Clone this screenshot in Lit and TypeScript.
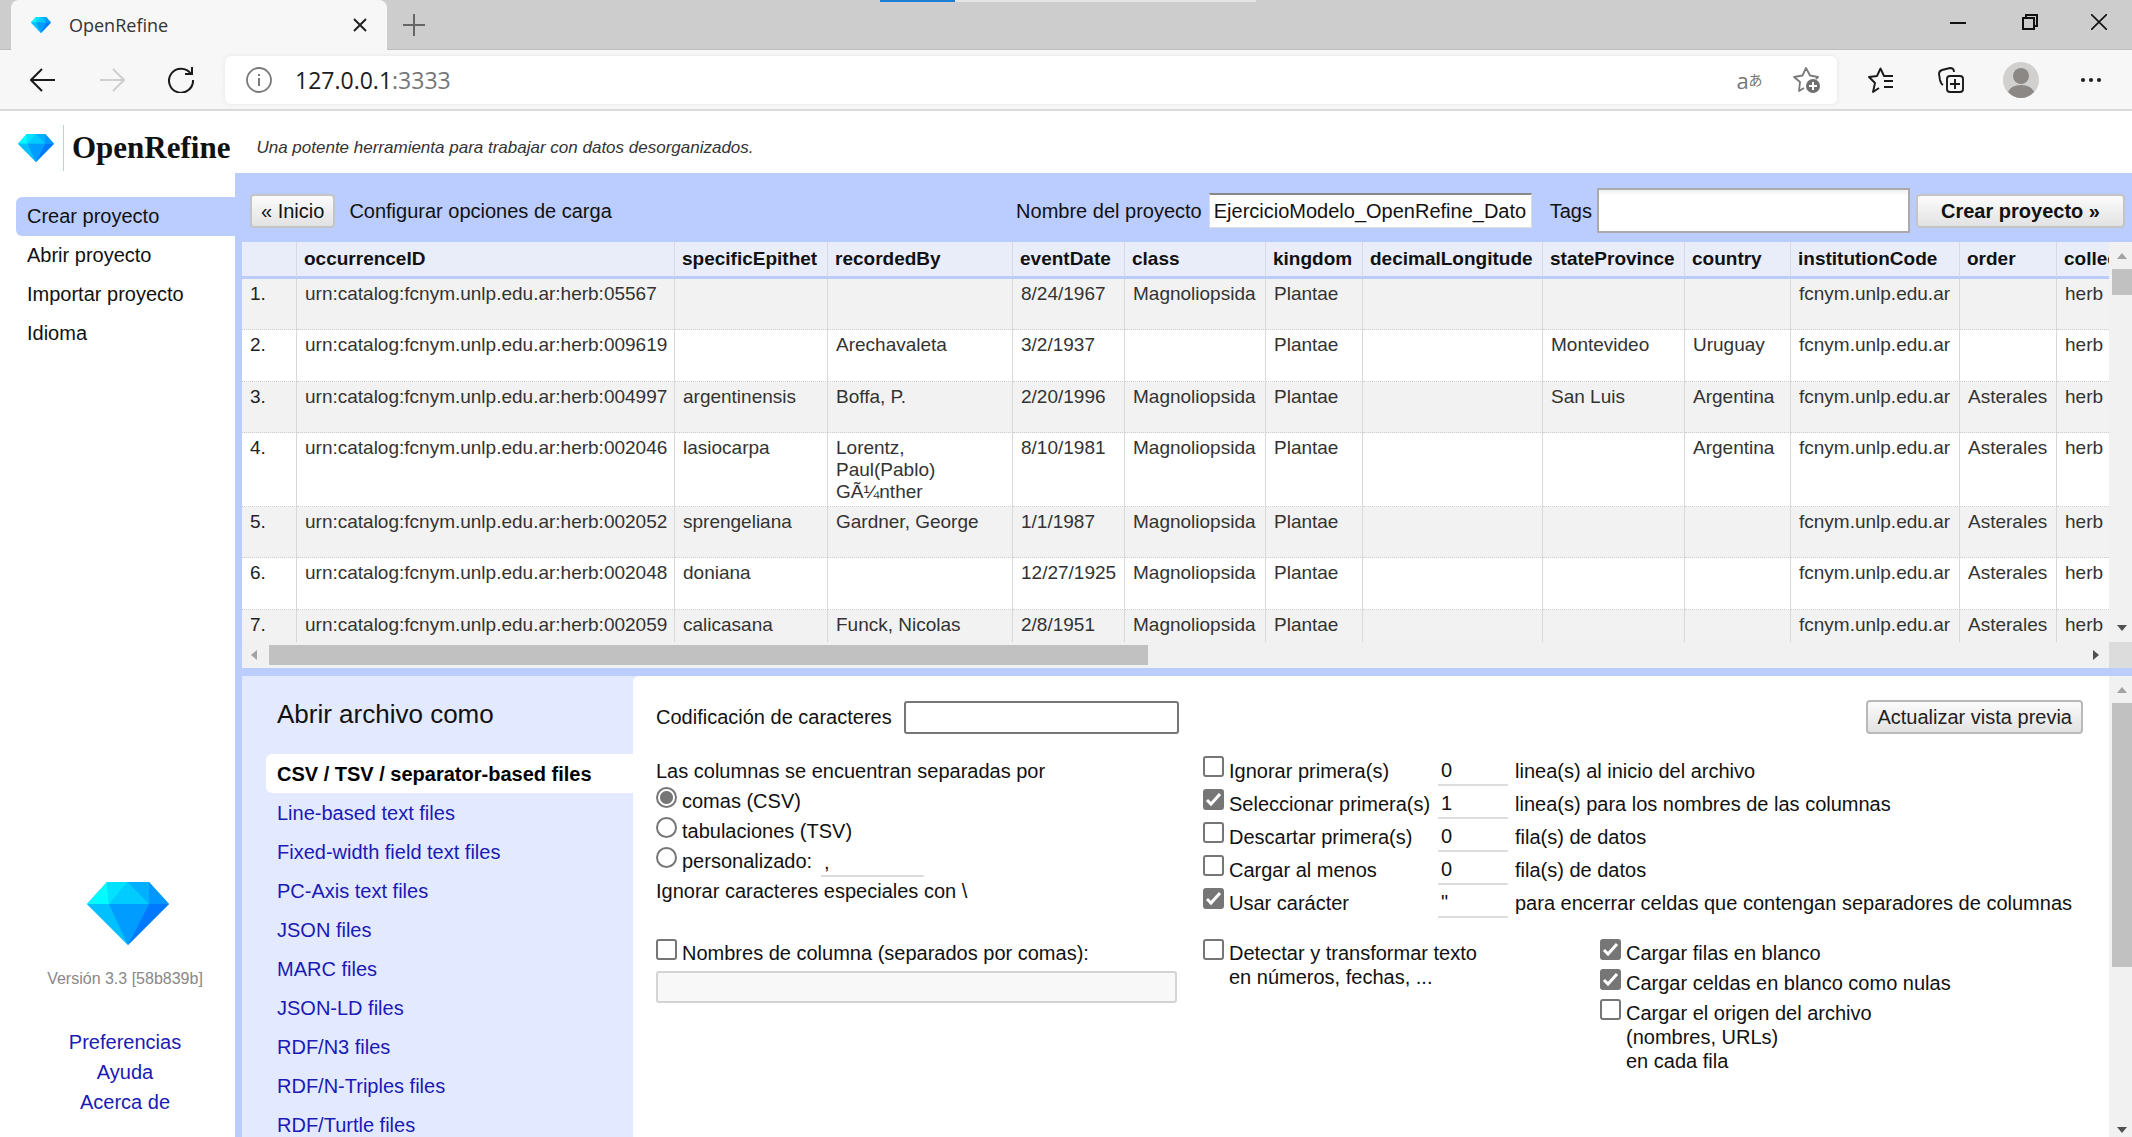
import { LitElement, html, svg, css } from "lit";
import { customElement } from "lit/decorators.js";

const COLUMNS: [string, number][] = [
  ["", 55],
  ["occurrenceID", 378],
  ["specificEpithet", 153],
  ["recordedBy", 185],
  ["eventDate", 112],
  ["class", 141],
  ["kingdom", 97],
  ["decimalLongitude", 180],
  ["stateProvince", 142],
  ["country", 106],
  ["institutionCode", 169],
  ["order", 97],
  ["collectionCode", 160],
];

const INST = "fcnym.unlp.edu.ar";
const URN = "urn:catalog:fcnym.unlp.edu.ar:herb:";
const ROWS: string[][] = [
  [URN + "05567", "", "", "8/24/1967", "Magnoliopsida", "Plantae", "", "", "", INST, "", "herb"],
  [URN + "009619", "", "Arechavaleta", "3/2/1937", "", "Plantae", "", "Montevideo", "Uruguay", INST, "", "herb"],
  [URN + "004997", "argentinensis", "Boffa, P.", "2/20/1996", "Magnoliopsida", "Plantae", "", "San Luis", "Argentina", INST, "Asterales", "herb"],
  [URN + "002046", "lasiocarpa", "Lorentz, Paul(Pablo) GÃ¼nther", "8/10/1981", "Magnoliopsida", "Plantae", "", "", "Argentina", INST, "Asterales", "herb"],
  [URN + "002052", "sprengeliana", "Gardner, George", "1/1/1987", "Magnoliopsida", "Plantae", "", "", "", INST, "Asterales", "herb"],
  [URN + "002048", "doniana", "", "12/27/1925", "Magnoliopsida", "Plantae", "", "", "", INST, "Asterales", "herb"],
  [URN + "002059", "calicasana", "Funck, Nicolas", "2/8/1951", "Magnoliopsida", "Plantae", "", "", "", INST, "Asterales", "herb"],
];

const gem = (cls: string) => html`<svg class=${cls} viewBox="0 0 82 63" preserveAspectRatio="none" aria-hidden="true">
  ${svg`<path d="M20 0 H62 L82 22 L41 63 L0 22 Z" fill="#00b4ff"/>
  <path d="M20 0 L0 22 L22 22 Z" fill="#00fcff"/>
  <path d="M20 0 L41 0 L22 22 Z" fill="#00e2ff"/>
  <path d="M41 0 L62 22 H22 Z" fill="#00ccff"/>
  <path d="M41 0 H62 L62 22 Z" fill="#00b0ff"/>
  <path d="M62 0 L82 22 H62 Z" fill="#0098ff"/>
  <path d="M0 22 H22 L41 63 Z" fill="#00c0ff"/>
  <path d="M22 22 H62 L41 63 Z" fill="#009cff"/>
  <path d="M62 22 H82 L41 63 Z" fill="#0078ff"/>`}
</svg>`;

const arrow = (dir: string, off = false) => {
  const d: Record<string, string> = {
    up: "M1 9 L6 3 L11 9 Z",
    down: "M1 3 L6 9 L11 3 Z",
    left: "M9 1 L3 6 L9 11 Z",
    right: "M3 1 L9 6 L3 11 Z",
  };
  return html`<svg width="12" height="12" viewBox="0 0 12 12" aria-hidden="true"><path d=${d[dir]} fill=${off ? "#a3a3a3" : "#505050"}></path></svg>`;
};

@customElement("browser-chrome")
class BrowserChrome extends LitElement {
  static styles = css`
    :host { display: block; font-family: "Open Sans", "Noto Sans CJK JP", sans-serif; }
    * { box-sizing: border-box; }
    button { border: 0; background: none; padding: 0; margin: 0; display: flex; align-items: center; justify-content: center; flex: none; font-family: inherit; }
    .tabs { position: relative; display: flex; height: 50px; background: #cdcdcd; box-shadow: inset 0 -1px #bfbfbf; padding-left: 11px; }
    .tab { display: flex; align-items: center; width: 376px; background: #f7f7f7; border-radius: 8px 8px 0 0; padding: 0 19px 0 20px; gap: 18px; font-size: 18px; color: #333; }
    .tab .name { flex: 1; }
    .favicon { width: 20px; height: 16px; }
    .plus { width: 54px; }
    .grow { flex: 1; }
    .win { width: 72px; height: 44px; }
    .win:last-of-type { width: 66px; }
    .load { position: absolute; left: 880px; top: 0; width: 376px; height: 2px; background: linear-gradient(90deg, #1b7fd6 75px, #e4e4e4 75px); }
    .bar { display: flex; align-items: center; height: 61px; background: #f7f7f7; border-bottom: 2px solid #d9d9d9; padding: 0 6px 0 8px; }
    .nav { width: 69px; height: 44px; }
    .address { flex: 1; height: 48px; display: flex; align-items: center; background: #fff; border-radius: 6px; box-shadow: 0 0 4px #e4e4e4; padding: 0 2px 0 21px; margin: 0 9px 0 10px; }
    .urltext { font-size: 23px; line-height: 32px; color: #1c1c1c; margin-left: 23px; text-decoration: none; flex: 1; }
    .port { color: #767676; }
    .tool { width: 70px; height: 44px; }
    .inner { width: 57px; height: 44px; color: #767676; }
    .latin { font-size: 22px; line-height: 24px; }
    .kana { font-size: 14px; line-height: 24px; }
  `;
  render() {
    return html`
      <div class="tabs">
        <div class="tab">
          ${gem("favicon")}
          <span class="name">OpenRefine</span>
          <button aria-label="Cerrar pestaña"><svg width="16" height="16" viewBox="0 0 16 16"><path d="M2 2 L14 14 M14 2 L2 14" stroke="#222" stroke-width="2"/></svg></button>
        </div>
        <button class="plus" aria-label="Nueva pestaña"><svg width="22" height="22" viewBox="0 0 22 22"><path d="M11 0 V22 M0 11 H22" stroke="#666" stroke-width="2"/></svg></button>
        <div class="grow"></div>
        <button class="win" aria-label="Minimizar"><svg width="16" height="16" viewBox="0 0 16 16"><path d="M0 9 H16" stroke="#111" stroke-width="2"/></svg></button>
        <button class="win" aria-label="Restaurar"><svg width="16" height="16" viewBox="0 0 16 16"><path d="M1 4 H12 V15 H1 Z M4 4 V1 H15 V12 H12" fill="none" stroke="#111" stroke-width="2"/></svg></button>
        <button class="win" aria-label="Cerrar"><svg width="16" height="16" viewBox="0 0 16 16"><path d="M0 0 L16 16 M16 0 L0 16" stroke="#111" stroke-width="1.600"/></svg></button>
        <div class="load"></div>
      </div>
      <div class="bar">
        <button class="nav" aria-label="Atrás"><svg width="26" height="24" viewBox="0 0 26 24"><path d="M25 12 H1 M12 1 L1 12 L12 23" fill="none" stroke="#1a1a1a" stroke-width="2"/></svg></button>
        <button class="nav" aria-label="Adelante"><svg width="26" height="24" viewBox="0 0 26 24"><path d="M1 12 H25 M14 1 L25 12 L14 23" fill="none" stroke="#cfcfcf" stroke-width="2"/></svg></button>
        <button class="nav" aria-label="Actualizar"><svg width="26" height="26" viewBox="0 0 26 26"><path d="M23 7 A12 12 0 1 0 25 13 M24 0 V7 H17" fill="none" stroke="#1a1a1a" stroke-width="2"/></svg></button>
        <div class="address">
          <svg width="26" height="26" viewBox="0 0 26 26"><circle cx="13" cy="13" r="12" fill="none" stroke="#7a7a7a" stroke-width="1.800"/><path d="M13 11 V19 M13 7 V9" stroke="#7a7a7a" stroke-width="2"/></svg>
          <a class="urltext" href="#">127.0.0.1<span class="port">:3333</span></a>
          <button class="inner" aria-label="Traducir"><span class="latin">a</span><span class="kana">あ</span></button>
          <button class="inner" aria-label="Agregar a favoritos"><svg width="28" height="28" viewBox="0 0 28 28"><path d="M11 22 L6 25 L7 16 L1 11 L9.500 9.500 L13 2 L17 9.500 L25 11 L23 13" fill="none" stroke="#7a7a7a" stroke-width="1.800" stroke-linejoin="round"/><circle cx="20" cy="20" r="7" fill="#6f6f6f"/><path d="M20 16 V24 M16 20 H24" stroke="#fff" stroke-width="2"/></svg></button>
        </div>
        <button class="tool" aria-label="Favoritos"><svg width="28" height="26" viewBox="0 0 28 26"><path d="M19 9 L17 9 L13.500 1.500 L10 9 L2 10 L8 16 L6 25 L12 21 M18 9 H26 M17 14 H26 M17 20 H26" fill="none" stroke="#1a1a1a" stroke-width="1.900" stroke-linejoin="round"/></svg></button>
        <button class="tool" aria-label="Colecciones"><svg width="26" height="26" viewBox="0 0 26 26"><path d="M5 18 Q3 17 2 13 L1 7 Q1 4 4 3 L12 1 Q16 1 16 5" fill="none" stroke="#1a1a1a" stroke-width="1.900"/><rect x="9" y="9" width="16" height="16" rx="3" fill="none" stroke="#1a1a1a" stroke-width="1.900"/><path d="M17 12 V22 M12 17 H22" stroke="#1a1a1a" stroke-width="1.900"/></svg></button>
        <button class="tool" aria-label="Perfil"><svg width="36" height="36" viewBox="0 0 36 36"><circle cx="18" cy="18" r="18" fill="#d2d0ce"/><circle cx="18" cy="14" r="8" fill="#8b8886"/><path d="M5 30 Q8 23 18 23 Q28 23 31 30 Q25 36 18 36 Q11 36 5 30" fill="#8b8886"/></svg></button>
        <button class="tool" aria-label="Más"><svg width="22" height="6" viewBox="0 0 22 6"><g fill="#1a1a1a"><circle cx="3" cy="3" r="2"/><circle cx="11" cy="3" r="2"/><circle cx="19" cy="3" r="2"/></g></svg></button>
      </div>`;
  }
}

@customElement("preview-table")
class PreviewTable extends LitElement {
  static styles = css`
    :host { display: grid; grid-template-columns: minmax(0, 1fr) 23px; grid-template-rows: 400px 26px; background: #f1f1f1; }
    * { box-sizing: border-box; }
    .clip { overflow: hidden; }
    table { table-layout: fixed; border-collapse: separate; border-spacing: 0; width: 1975px; font-size: 19px; line-height: 22px; color: #333; background: #fff; }
    th { height: 37px; padding: 0 0 0 7px; text-align: left; color: #111; background: #e9edf9; border-right: 1px solid #d8dae2; border-bottom: 3px solid #bbccff; white-space: nowrap; font-weight: bold; }
    td { height: 51px; vertical-align: top; padding: 4px 7px 3px 8px; border-right: 1px solid #d9d9d9; border-bottom: 1px dotted #ccc; }
    tr:nth-child(even) td { height: 52px; }
    tr:nth-child(odd) td { background: #f2f2f2; }
    .num { color: #222; }
    .v, .h { display: flex; align-items: center; }
    .v { flex-direction: column; padding: 8px 0 8px 3px; }
    .vthumb { width: 100%; height: 26px; background: #c1c1c1; margin-top: 7px; }
    .h { padding: 0 7px 0 6px; }
    .hthumb { flex: 14; height: 20px; background: #c1c1c1; margin-left: 9px; }
    .rest { flex: 15; }
    .corner { background: #dcdcdc; }
  `;
  render() {
    return html`
      <div class="clip">
        <table>
          <colgroup>${COLUMNS.map((c) => html`<col style="width:${c[1]}px">`)}</colgroup>
          <thead><tr>${COLUMNS.map((c) => html`<th scope="col">${c[0]}</th>`)}</tr></thead>
          <tbody>
            ${ROWS.map((r, i) => html`<tr><td class="num">${i + 1}.</td>${r.map((c) => html`<td>${c}</td>`)}</tr>`)}
          </tbody>
        </table>
      </div>
      <div class="v">${arrow("up", true)}<div class="vthumb"></div><div class="rest"></div>${arrow("down")}</div>
      <div class="h">${arrow("left", true)}<div class="hthumb"></div><div class="rest"></div>${arrow("right")}</div>
      <div class="corner"></div>`;
  }
}

const FORMATS = [
  "CSV / TSV / separator-based files", "Line-based text files", "Fixed-width field text files", "PC-Axis text files",
  "JSON files", "MARC files", "JSON-LD files", "RDF/N3 files", "RDF/N-Triples files", "RDF/Turtle files",
];

const LIMITS: [string, boolean, string, string][] = [
  ["Ignorar primera(s)", false, "0", "linea(s) al inicio del archivo"],
  ["Seleccionar primera(s)", true, "1", "linea(s) para los nombres de las columnas"],
  ["Descartar primera(s)", false, "0", "fila(s) de datos"],
  ["Cargar al menos", false, "0", "fila(s) de datos"],
  ["Usar carácter", true, '"', "para encerrar celdas que contengan separadores de columnas"],
];

@customElement("parser-options")
class ParserOptions extends LitElement {
  static styles = css`
    :host { display: grid; grid-template-columns: 391px minmax(0, 1fr) 23px; background: #e3e9ff; min-height: 0; overflow: hidden; font-size: 20px; line-height: 24px; color: #111; }
    * { box-sizing: border-box; }
    input, button { font: inherit; color: inherit; margin: 0; }
    .formats { padding: 20px 0 0 24px; }
    h2 { font-size: 26px; line-height: 36px; font-weight: normal; margin: 0 0 22px 11px; }
    .formats a { display: block; height: 39px; line-height: 40px; padding-left: 11px; color: #1a1ab5; text-decoration: none; white-space: nowrap; }
    .formats a.sel { background: #fff; color: #000; font-weight: bold; border-radius: 6px 0 0 6px; }
    .panel { background: #fff; border-radius: 6px 0 0 0; padding: 24px 0 0 23px; }
    .top { display: flex; align-items: center; padding-right: 26px; gap: 12px; height: 34px; margin-bottom: 22px; }
    .enc { width: 275px; height: 33px; border: 2px solid #767676; border-radius: 3px; background: #fff; }
    .update { margin-left: auto; height: 34px; padding: 0 9px; border: 2px solid #b9b9b9; border-radius: 4px; background: linear-gradient(#fbfbfb, #e2e2e2); color: #222; white-space: nowrap; line-height: 28px; }
    .row1 { display: grid; grid-template-columns: minmax(0, 547fr) minmax(0, 906fr); margin-bottom: 17px; }
    .row2 { display: grid; grid-template-columns: minmax(0, 547fr) minmax(0, 397fr) minmax(0, 509fr); }
    .line { display: flex; align-items: flex-start; height: 30px; padding-top: 3px; white-space: nowrap; }
    .tall { height: auto; }
    .line label { padding-left: 5px; }
    input[type="radio"], input[type="checkbox"] { appearance: none; flex: none; width: 21px; height: 21px; border: 2px solid #767676; background: #fff; margin-top: -2px; }
    input[type="radio"] { border-radius: 50%; }
    input[type="radio"]:checked { background: radial-gradient(circle, #767676 0 6px, #fff 7px); }
    input[type="checkbox"] { border-radius: 3px; }
    input[type="checkbox"]:checked { background: #767676 linear-gradient(#767676, #767676); border-color: #767676; }
    .tick { display: grid; flex: none; }
    .tick > * { grid-area: 1 / 1; }
    .tick svg { width: 21px; height: 21px; margin-top: -2px; pointer-events: none; }
    .under { border: 0; border-bottom: 2px solid #ddd; border-radius: 0; background: transparent; padding: 0 3px; height: 28px; outline: 0; }
    .custom { width: 103px; margin-left: 9px; }
    .limits { display: grid; grid-template-columns: 21px 214px 70px minmax(0, 1fr); grid-auto-rows: 33px; align-items: start; white-space: nowrap; }
    .limits > .tick { padding-top: 2px; }
    .limits > label { padding: 3px 0 0 5px; }
    .limits > .trail { padding: 3px 0 0 7px; }
    .limits > .under { height: 30px; }
    .names { display: block; width: 521px; max-width: 100%; height: 32px; border: 2px solid #d4d4d4; border-radius: 3px; background: #f8f8f8; margin-top: 3px; }
    .v { display: flex; flex-direction: column; align-items: center; background: #f1f1f1; padding: 8px 0 8px 3px; }
    .vthumb { width: 100%; height: 264px; background: #c1c1c1; margin-top: 7px; }
    .rest { flex: 1; }
  `;

  box(id: string, on: boolean) {
    return html`<span class="tick"><input type="checkbox" id=${id} .checked=${on}>${on
      ? html`<svg viewBox="0 0 21 21" aria-hidden="true"><path d="M4 11 L8 15 L17 5" fill="none" stroke="#fff" stroke-width="3"></path></svg>`
      : ""}</span>`;
  }

  render() {
    return html`
      <nav class="formats">
        <h2>Abrir archivo como</h2>
        ${FORMATS.map((f, i) => html`<a href="#" class=${i === 0 ? "sel" : ""}>${f}</a>`)}
      </nav>
      <form class="panel">
        <div class="top">
          <label for="enc">Codificación de caracteres</label>
          <input class="enc" id="enc" type="text">
          <button class="update" type="button">Actualizar vista previa</button>
        </div>
        <div class="row1">
          <div>
            <div class="line">Las columnas se encuentran separadas por</div>
            <div class="line"><input type="radio" name="sep" id="csv" checked><label for="csv">comas (CSV)</label></div>
            <div class="line"><input type="radio" name="sep" id="tsv"><label for="tsv">tabulaciones (TSV)</label></div>
            <div class="line"><input type="radio" name="sep" id="cus"><label for="cus">personalizado:</label><input class="under custom" type="text" aria-label="Separador personalizado" value=","></div>
            <div class="line">Ignorar caracteres especiales con \\</div>
          </div>
          <div class="limits">
            ${LIMITS.map((l, i) => html`
              ${this.box("lim" + i, l[1])}
              <label for=${"lim" + i}>${l[0]}</label>
              <input class="under" type="text" aria-label=${l[0] + " valor"} .value=${l[2]}>
              <span class="trail">${l[3]}</span>`)}
          </div>
        </div>
        <div class="row2">
          <div>
            <div class="line">${this.box("names", false)}<label for="names">Nombres de columna (separados por comas):</label></div>
            <input class="names" type="text" disabled aria-label="Nombres de columna">
          </div>
          <div class="line tall">${this.box("detect", false)}<label for="detect">Detectar y transformar texto<br>en números, fechas, ...</label></div>
          <div>
            <div class="line">${this.box("blank", true)}<label for="blank">Cargar filas en blanco</label></div>
            <div class="line">${this.box("null", true)}<label for="null">Cargar celdas en blanco como nulas</label></div>
            <div class="line tall">${this.box("src", false)}<label for="src">Cargar el origen del archivo<br>(nombres, URLs)<br>en cada fila</label></div>
          </div>
        </div>
      </form>
      <div class="v">${arrow("up", true)}<div class="vthumb"></div><div class="rest"></div>${arrow("down")}</div>`;
  }
}

@customElement("app-root")
class AppRoot extends LitElement {
  static styles = css`
    :host { display: flex; flex-direction: column; height: 100vh; overflow: hidden; background: #fff; font-family: "Liberation Sans", Arial, sans-serif; font-size: 20px; line-height: 24px; color: #111; }
    * { box-sizing: border-box; }
    input, button { font: inherit; color: inherit; margin: 0; }
    header { display: flex; align-items: center; height: 62px; flex: none; padding: 12px 0 0 18px; }
    .mark { width: 36px; height: 28px; }
    .rule { width: 1px; height: 46px; background: #b8cdf5; margin: 0 8px 0 9px; }
    .brand { font: bold 31px/40px "Liberation Serif", serif; color: #111; }
    .tagline { font-size: 17px; font-style: italic; color: #333; margin-left: 26px; }
    .main { flex: 1; min-height: 0; display: grid; grid-template-columns: 235px minmax(0, 1fr); }
    .side { display: flex; flex-direction: column; padding: 24px 0 20px 16px; }
    .side a { text-decoration: none; }
    .actions a { display: block; height: 39px; line-height: 39px; padding-left: 11px; color: #111; }
    .actions a.sel { background: #bbccff; border-radius: 6px 0 0 6px; }
    .about { margin: auto 0 0 -16px; width: 250px; display: flex; flex-direction: column; align-items: center; }
    .big { width: 82px; height: 63px; margin-left: 6px; }
    .version { font-size: 16px; color: #888; margin: 22px 0 36px; }
    .about a { height: 30px; line-height: 30px; color: #1a1ab5; }
    .work { display: flex; flex-direction: column; min-height: 0; background: #bbccff; padding-left: 7px; }
    .head { display: flex; align-items: center; height: 69px; flex: none; padding: 6px 7px 0 8px; white-space: nowrap; }
    .head .btn { height: 34px; border: 2px solid #c4c4c4; border-radius: 4px; background: linear-gradient(#fcfcfc, #e2e2e2); color: #111; padding: 0 9px; line-height: 28px; }
    .title { margin: 0 auto 0 14px; font-size: 20px; font-weight: normal; }
    .pname { width: 323px; height: 35px; margin: 0 18px 0 7px; border: 1px solid #ddd; border-top: 2px solid #888; background: #fff; padding: 0 5px 0 4px; }
    .tags { width: 313px; height: 45px; margin: 0 6px 0 5px; border: 2px solid #aaa; background: linear-gradient(#f0f0f0, #fff 6px); }
    .head .go { font-weight: bold; width: 209px; }
    preview-table { flex: none; }
    parser-options { flex: 1; margin-top: 8px; }
  `;
  render() {
    return html`
      <browser-chrome></browser-chrome>
      <header>
        ${gem("mark")}<span class="rule"></span><span class="brand">OpenRefine</span>
        <span class="tagline">Una potente herramienta para trabajar con datos desorganizados.</span>
      </header>
      <div class="main">
        <aside class="side">
          <nav class="actions">
            <a class="sel" href="#">Crear proyecto</a>
            <a href="#">Abrir proyecto</a>
            <a href="#">Importar proyecto</a>
            <a href="#">Idioma</a>
          </nav>
          <div class="about">
            ${gem("big")}
            <div class="version">Versión 3.3 [58b839b]</div>
            <a href="#">Preferencias</a>
            <a href="#">Ayuda</a>
            <a href="#">Acerca de</a>
          </div>
        </aside>
        <main class="work">
          <div class="head">
            <button class="btn">« Inicio</button>
            <h1 class="title">Configurar opciones de carga</h1>
            <label for="pname">Nombre del proyecto</label>
            <input class="pname" id="pname" type="text" value="EjercicioModelo_OpenRefine_Datos">
            <label for="tags">Tags</label>
            <input class="tags" id="tags" type="text">
            <button class="btn go">Crear proyecto »</button>
          </div>
          <preview-table></preview-table>
          <parser-options></parser-options>
        </main>
      </div>`;
  }
}
